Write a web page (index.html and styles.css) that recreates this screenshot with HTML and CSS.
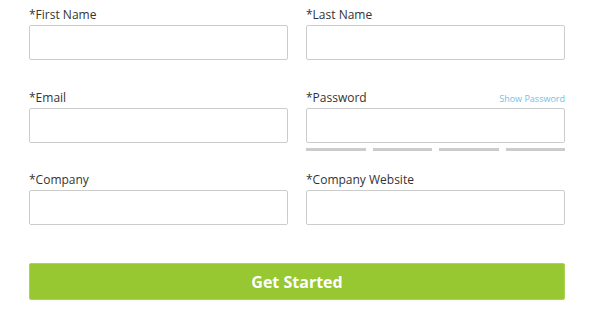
FILE: index.html
```html
<!DOCTYPE html>
<html lang="en">
<head>
  <meta charset="UTF-8" />
  <meta name="viewport" content="width=device-width, initial-scale=1.0" />
  <title>Sign Up</title>
  <link rel="stylesheet" href="styles.css">
</head>
<body>
  <form class="signup-form">
    <div class="fields">
      <div class="field">
        <div class="field-label"><label>*First Name</label></div>
        <input type="text" />
      </div>
      <div class="field">
        <div class="field-label"><label>*Last Name</label></div>
        <input type="text" />
      </div>
      <div class="field">
        <div class="field-label"><label>*Email</label></div>
        <input type="email" />
      </div>
      <div class="field">
        <div class="field-label">
          <label>*Password</label>
          <a href="#" class="show-password">Show Password</a>
        </div>
        <input type="password" />
        <div class="strength">
          <span></span><span></span><span></span><span></span>
        </div>
      </div>
      <div class="field">
        <div class="field-label"><label>*Company</label></div>
        <input type="text" />
      </div>
      <div class="field">
        <div class="field-label"><label>*Company Website</label></div>
        <input type="text" />
      </div>
    </div>
    <button type="submit" class="submit-btn">Get Started</button>
  </form>
</body>
</html>
```

FILE: styles.css
```css
body {
  margin: 0;
  background-color: #ffffff;
  font-family: "Open Sans", "Noto Sans", sans-serif;
  color: #333333;
}

.signup-form {
  padding: 6px 35px 0 29px;
}

.fields {
  display: grid;
  grid-template-columns: 1fr 1fr;
  grid-auto-rows: 82.5px;
  column-gap: 18px;
}

.field-label {
  display: flex;
  justify-content: space-between;
  align-items: baseline;
  height: 17px;
  line-height: 17px;
  margin-bottom: 2px;
}

.field-label label {
  font-size: 12px;
}

.show-password {
  font-size: 9px;
  color: #72bfe7;
  text-decoration: none;
}

.field input {
  display: block;
  box-sizing: border-box;
  width: 100%;
  height: 35px;
  border: 1px solid #cccccc;
  border-radius: 2px;
  padding: 0 10px;
  margin: 0;
}

.strength {
  display: flex;
  gap: 7px;
  margin-top: 5px;
}

.strength span {
  flex: 1;
  height: 3px;
  background-color: #cccccc;
}

.submit-btn {
  display: block;
  width: 100%;
  height: 37px;
  margin-top: 9.5px;
  border: 1px solid #a9d458;
  border-radius: 2px;
  background-color: #97c731;
  color: #ffffff;
  font-family: "Open Sans", "Noto Sans", sans-serif;
  font-size: 16px;
  font-weight: 700;
  cursor: pointer;
}
```
